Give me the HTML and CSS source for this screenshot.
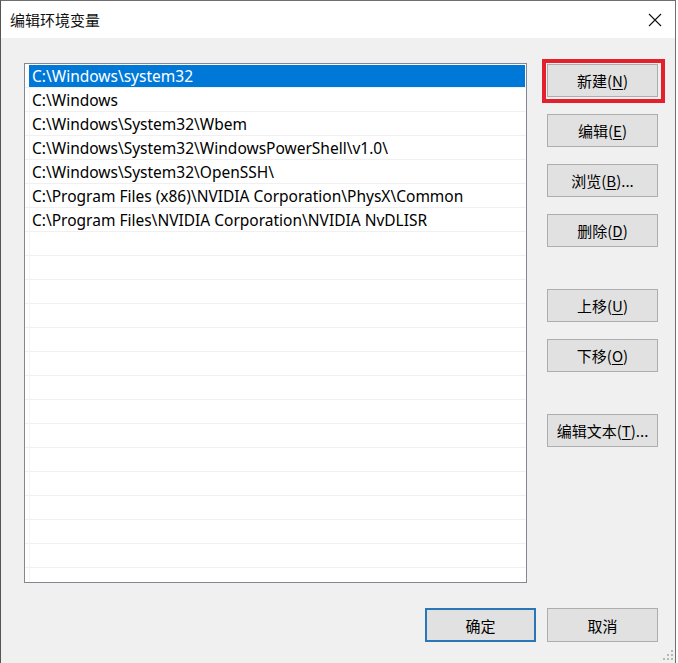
FILE: index.html
```html
<!DOCTYPE html>
<html lang="zh-CN">
<head>
  <meta charset="UTF-8">
  <title>编辑环境变量</title>
  <link rel="stylesheet" href="styles.css">
</head>
<body>

  <div class="window">
    <!-- Title Bar -->
    <div class="titlebar">
      <span class="title">编辑环境变量</span>
      <span class="close">
        <svg width="14" height="14" viewBox="0 0 14 14">
          <path d="M1 1 L13 13 M13 1 L1 13" stroke="#111" stroke-width="1.1" fill="none"/>
        </svg>
      </span>
    </div>

    <!-- Dialog Body -->
    <div class="client">
      <div class="main">
        <div class="list">
          <div class="row selected"><span class="cell">C:\Windows\system32</span></div>
          <div class="row"><span class="cell">C:\Windows</span></div>
          <div class="row"><span class="cell">C:\Windows\System32\Wbem</span></div>
          <div class="row"><span class="cell">C:\Windows\System32\WindowsPowerShell\v1.0\</span></div>
          <div class="row"><span class="cell">C:\Windows\System32\OpenSSH\</span></div>
          <div class="row"><span class="cell">C:\Program Files (x86)\NVIDIA Corporation\PhysX\Common</span></div>
          <div class="row"><span class="cell">C:\Program Files\NVIDIA Corporation\NVIDIA NvDLISR</span></div>
          <div class="row"><span class="cell"></span></div>
          <div class="row"><span class="cell"></span></div>
          <div class="row"><span class="cell"></span></div>
          <div class="row"><span class="cell"></span></div>
          <div class="row"><span class="cell"></span></div>
          <div class="row"><span class="cell"></span></div>
          <div class="row"><span class="cell"></span></div>
          <div class="row"><span class="cell"></span></div>
          <div class="row"><span class="cell"></span></div>
          <div class="row"><span class="cell"></span></div>
          <div class="row"><span class="cell"></span></div>
          <div class="row"><span class="cell"></span></div>
          <div class="row"><span class="cell"></span></div>
          <div class="row"><span class="cell"></span></div>
          <div class="row"><span class="cell"></span></div>
        </div>

        <div class="side">
          <div class="marked">
            <button class="btn">新建(<u>N</u>)</button>
          </div>
          <button class="btn">编辑(<u>E</u>)</button>
          <button class="btn">浏览(<u>B</u>)...</button>
          <button class="btn">删除(<u>D</u>)</button>
          <button class="btn group">上移(<u>U</u>)</button>
          <button class="btn">下移(<u>O</u>)</button>
          <button class="btn group">编辑文本(<u>T</u>)...</button>
        </div>
      </div>

      <!-- OK / Cancel -->
      <div class="footer">
        <button class="btn default">确定</button>
        <button class="btn">取消</button>
      </div>

      <svg class="grip" width="11" height="11" viewBox="0 0 11 11">
        <rect x="8" y="0" width="2" height="2" fill="#b8b8b8"/>
        <rect x="4" y="4" width="2" height="2" fill="#b8b8b8"/>
        <rect x="8" y="4" width="2" height="2" fill="#b8b8b8"/>
        <rect x="0" y="8" width="2" height="2" fill="#b8b8b8"/>
        <rect x="4" y="8" width="2" height="2" fill="#b8b8b8"/>
        <rect x="8" y="8" width="2" height="2" fill="#b8b8b8"/>
      </svg>
    </div>
  </div>

</body>
</html>
```

FILE: styles.css
```css
/* Basic Reset */
* {
  margin: 0;
  padding: 0;
  box-sizing: border-box;
}

body {
  background-color: #fff;
  width: 678px;
  height: 663px;
  overflow: hidden;
  font-family: "Noto Sans", "Noto Sans CJK SC", sans-serif;
  font-size: 15px;
  color: #000;
}

/* Dialog Frame */
.window {
  width: 676px;
  height: 663px;
  border: 1px solid #6f6f6f;
  border-left-color: #555;
  border-bottom: none;
  display: flex;
  flex-direction: column;
  background: #f0f0f0;
}

/* Title Bar */
.titlebar {
  height: 37px;
  background: #fff;
  display: flex;
  align-items: center;
  justify-content: space-between;
  padding: 0 13px 0 9px;
}

.title {
  font-family: "Noto Sans CJK SC", sans-serif;
  font-size: 15px;
  color: #111;
  padding-bottom: 1px;
}

.close {
  display: flex;
  align-items: center;
}

/* Dialog Body */
.client {
  flex: 1;
  position: relative;
  padding: 25px 17px 0 23px;
}

.main {
  display: flex;
  gap: 20px;
}

/* Path List */
.list {
  width: 503px;
  height: 520px;
  background: #fff;
  border: 1px solid #828790;
  overflow: hidden;
}

.row {
  height: 24px;
  border-bottom: 1px solid #f0f0f0;
  padding-left: 4px;
  display: flex;
}

.row .cell {
  flex: 1;
  border-left: 1px solid #f4f4f4;
  padding-left: 2px;
  font-size: 15.5px;
  line-height: 24px;
  white-space: nowrap;
}

.row.selected .cell {
  background: #0078d7;
  color: #fff;
  margin-top: 1px;
  margin-right: 1px;
  line-height: 23px;
  border-left-color: #0078d7;
}

/* Buttons */
.side {
  display: flex;
  flex-direction: column;
  padding-top: 1px;
}

.btn {
  width: 111px;
  height: 33px;
  background: #e1e1e1;
  border: 1px solid #adadad;
  font-family: "Noto Sans CJK SC", sans-serif;
  font-size: 15px;
  color: #000;
  margin-bottom: 17px;
}

.btn u {
  text-underline-offset: 2px;
}

.btn.group {
  margin-top: 25px;
}

.marked {
  position: relative;
  display: flex;
}

.marked::after {
  content: '';
  position: absolute;
  left: -5px;
  right: -7px;
  top: -5px;
  bottom: 11px;
  border: 4px solid #e3202b;
}

.footer {
  display: flex;
  justify-content: flex-end;
  gap: 11px;
  margin-top: 25px;
}

.footer .btn {
  height: 34px;
}

.btn.default {
  border: 2px solid #2a77b8;
}

/* Resize Grip */
.grip {
  position: absolute;
  right: 1px;
  bottom: 2px;
}
```
